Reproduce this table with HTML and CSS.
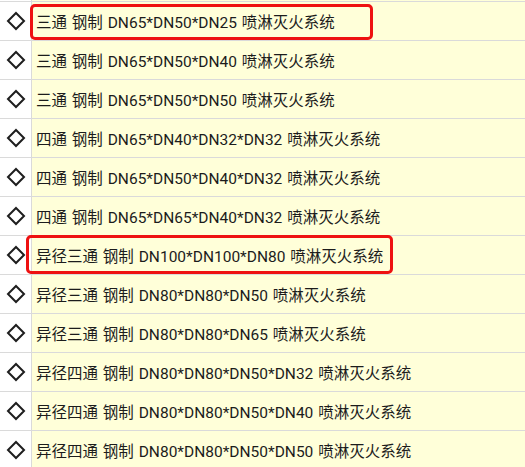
FILE: index.html
```html
<!DOCTYPE html>
<html lang="zh-CN">
<head>
  <meta charset="UTF-8">
  <title>管件列表</title>
  <link rel="stylesheet" href="styles.css">
</head>
<body>
  <div class="grid">
    <div class="row stub"><div class="mark"></div><div class="name"></div></div>

    <div class="row">
      <div class="mark"><svg class="diamond" viewBox="0 0 20 20"><polygon points="10,2 18,10 10,18 2,10"/></svg></div>
      <div class="name">三通 钢制 DN65*DN50*DN25 喷淋灭火系统</div>
      <div class="callout first"></div>
    </div>
    <div class="row">
      <div class="mark"><svg class="diamond" viewBox="0 0 20 20"><polygon points="10,2 18,10 10,18 2,10"/></svg></div>
      <div class="name">三通 钢制 DN65*DN50*DN40 喷淋灭火系统</div>
    </div>
    <div class="row">
      <div class="mark"><svg class="diamond" viewBox="0 0 20 20"><polygon points="10,2 18,10 10,18 2,10"/></svg></div>
      <div class="name">三通 钢制 DN65*DN50*DN50 喷淋灭火系统</div>
    </div>
    <div class="row">
      <div class="mark"><svg class="diamond" viewBox="0 0 20 20"><polygon points="10,2 18,10 10,18 2,10"/></svg></div>
      <div class="name">四通 钢制 DN65*DN40*DN32*DN32 喷淋灭火系统</div>
    </div>
    <div class="row">
      <div class="mark"><svg class="diamond" viewBox="0 0 20 20"><polygon points="10,2 18,10 10,18 2,10"/></svg></div>
      <div class="name">四通 钢制 DN65*DN50*DN40*DN32 喷淋灭火系统</div>
    </div>
    <div class="row">
      <div class="mark"><svg class="diamond" viewBox="0 0 20 20"><polygon points="10,2 18,10 10,18 2,10"/></svg></div>
      <div class="name">四通 钢制 DN65*DN65*DN40*DN32 喷淋灭火系统</div>
    </div>
    <div class="row">
      <div class="mark"><svg class="diamond" viewBox="0 0 20 20"><polygon points="10,2 18,10 10,18 2,10"/></svg></div>
      <div class="name">异径三通 钢制 DN100*DN100*DN80 喷淋灭火系统</div>
      <div class="callout second"></div>
    </div>
    <div class="row">
      <div class="mark"><svg class="diamond" viewBox="0 0 20 20"><polygon points="10,2 18,10 10,18 2,10"/></svg></div>
      <div class="name">异径三通 钢制 DN80*DN80*DN50 喷淋灭火系统</div>
    </div>
    <div class="row">
      <div class="mark"><svg class="diamond" viewBox="0 0 20 20"><polygon points="10,2 18,10 10,18 2,10"/></svg></div>
      <div class="name">异径三通 钢制 DN80*DN80*DN65 喷淋灭火系统</div>
    </div>
    <div class="row">
      <div class="mark"><svg class="diamond" viewBox="0 0 20 20"><polygon points="10,2 18,10 10,18 2,10"/></svg></div>
      <div class="name">异径四通 钢制 DN80*DN80*DN50*DN32 喷淋灭火系统</div>
    </div>
    <div class="row">
      <div class="mark"><svg class="diamond" viewBox="0 0 20 20"><polygon points="10,2 18,10 10,18 2,10"/></svg></div>
      <div class="name">异径四通 钢制 DN80*DN80*DN50*DN40 喷淋灭火系统</div>
    </div>
    <div class="row">
      <div class="mark"><svg class="diamond" viewBox="0 0 20 20"><polygon points="10,2 18,10 10,18 2,10"/></svg></div>
      <div class="name">异径四通 钢制 DN80*DN80*DN50*DN50 喷淋灭火系统</div>
    </div>
  </div>
</body>
</html>
```

FILE: styles.css
```css
body {
  margin: 0;
  background: #ffffff;
  font-family: Roboto, "Noto Sans CJK SC", sans-serif;
  overflow: hidden;
}

.grid {
  width: 525px;
  height: 467px;
  overflow: hidden;
}

.row {
  position: relative;
  display: flex;
  height: 38px;
  border-bottom: 1px solid #dadada;
}

.row.stub {
  height: 1px;
}

.mark {
  width: 30px;
  padding-left: 1px;
  flex: none;
  display: flex;
  align-items: center;
  justify-content: center;
  background: #ffffff;
  border-right: 1px solid #dadada;
}

.diamond {
  width: 20px;
  height: 20px;
}

.diamond polygon {
  fill: none;
  stroke: #1e1e1e;
  stroke-width: 2;
}

.name {
  flex: 1;
  display: flex;
  align-items: center;
  padding-left: 4px;
  background: #ffffd9;
  color: #1c1c1c;
  font-size: 15.5px;
  white-space: nowrap;
  word-spacing: 1px;
}

/* red annotation boxes drawn over the rows */
.callout {
  position: absolute;
  border: 3px solid #ee1111;
  border-radius: 5px;
  box-sizing: border-box;
  pointer-events: none;
}

.callout.first {
  left: 30px;
  top: 2px;
  width: 343px;
  height: 36px;
}

.callout.second {
  left: 26px;
  top: -1px;
  width: 367px;
  height: 39px;
}
```
